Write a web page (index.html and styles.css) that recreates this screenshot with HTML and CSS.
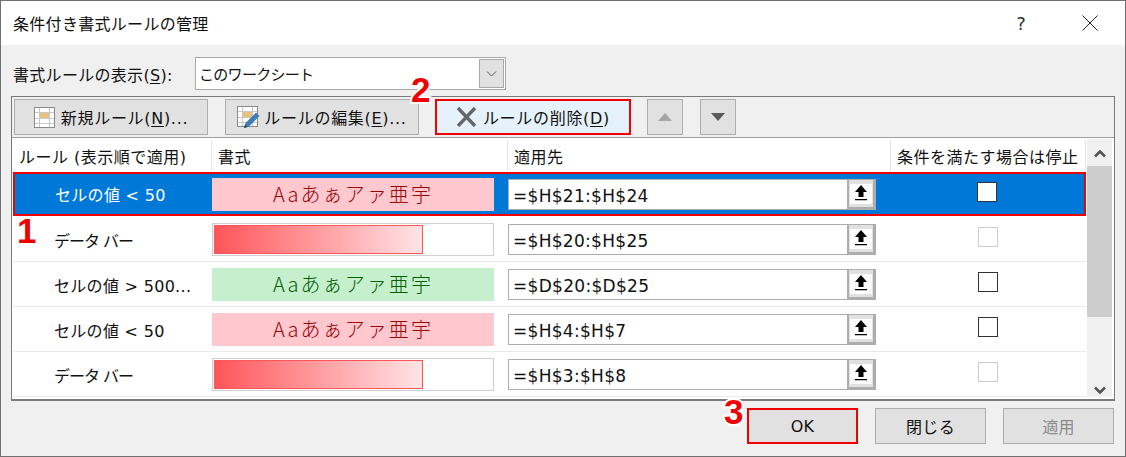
FILE: index.html
```html
<!DOCTYPE html>
<html lang="ja">
<head>
    <meta charset="UTF-8">
    <title>条件付き書式ルールの管理</title>
    <link rel="stylesheet" href="styles.css">
</head>
<body>
    <div class="dialog">
        <div class="titlebar">
            <span class="title">条件付き書式ルールの管理</span>
            <span class="help">?</span>
            <svg class="close" width="16" height="16" viewBox="0 0 16 16"><path d="M.5.5l15 15M15.5.5l-15 15" stroke="#222" fill="none"/></svg>
        </div>

        <div class="show-row">
            <label>書式ルールの表示(<u>S</u>):</label>
            <div class="combo">
                <span>このワークシート</span>
                <div class="combo-btn">
                    <svg width="11" height="6" viewBox="0 0 11 6"><path d="M1 .5l4.500 4.500L10 .5" stroke="#555" fill="none"/></svg>
                </div>
            </div>
        </div>

        <div class="panel">
            <div class="toolbar">
                <div class="btn btn-new">
                    <svg width="21" height="21" viewBox="0 0 21 21"><rect x=".5" y=".5" width="20" height="20" fill="#fff" stroke="#8a8a8a"/><rect x="6" y="6" width="10" height="5" fill="#e8c27e"/><path d="M1 5.500h19M1 11.500h19M1 16.500h19M5.500 1v19M15.500 1v19" stroke="#c8c8c8" fill="none"/></svg>
                    <span>新規ルール(<u>N</u>)...</span>
                </div>
                <div class="btn btn-edit">
                    <svg width="23" height="23" viewBox="0 0 23 23"><rect x=".5" y=".5" width="20" height="20" fill="#fff" stroke="#8a8a8a"/><rect x="6" y="6" width="10" height="5" fill="#e8c27e"/><path d="M1 5.500h19M1 11.500h19M1 16.500h19M5.500 1v19M15.500 1v19" stroke="#c8c8c8" fill="none"/><path d="M7 22l1.500-5L19 6.500l3.500 3.500L12 20.500z" fill="#3f7fb5"/><path d="M7 22l1-3.500 2.500 2.500z" fill="#24465f"/></svg>
                    <span>ルールの編集(<u>E</u>)...</span>
                </div>
                <div class="btn btn-delete">
                    <svg width="21" height="20" viewBox="0 0 21 20"><path d="M2 1l17 18M19 1L2 19" stroke="#666" stroke-width="3.400" fill="none"/></svg>
                    <span>ルールの削除(<u>D</u>)</span>
                </div>
                <div class="btn btn-move">
                    <svg width="14" height="8" viewBox="0 0 14 8"><path d="M7 0l7 8H0z" fill="#a6a6a6"/></svg>
                </div>
                <div class="btn btn-move">
                    <svg width="14" height="8" viewBox="0 0 14 8"><path d="M0 0h14L7 8z" fill="#5a5a5a"/></svg>
                </div>
            </div>

            <div class="list">
                <div class="table">
                    <div class="head">
                        <div>ルール (表示順で適用)</div>
                        <div>書式</div>
                        <div>適用先</div>
                        <div>条件を満たす場合は停止</div>
                    </div>

                    <div class="row selected">
                        <div class="rule">セルの値 &lt; 50</div>
                        <div class="sample pink">Aaあぁアァ亜宇</div>
                        <div class="range"><span>=$H$21:$H$24</span><b class="pick"><svg width="12" height="16" viewBox="0 0 12 16"><path d="M6 0l6 7H8.500v5h-5V7H0zM0 14h12v1.300H0z"/></svg></b></div>
                        <div class="check"><i></i></div>
                    </div>
                    <div class="row">
                        <div class="rule rule-bar">データ バー</div>
                        <div class="sample databar"><i></i></div>
                        <div class="range"><span>=$H$20:$H$25</span><b class="pick"><svg width="12" height="16" viewBox="0 0 12 16"><path d="M6 0l6 7H8.500v5h-5V7H0zM0 14h12v1.300H0z"/></svg></b></div>
                        <div class="check off"><i></i></div>
                    </div>
                    <div class="row">
                        <div class="rule">セルの値 &gt; 500...</div>
                        <div class="sample green">Aaあぁアァ亜宇</div>
                        <div class="range"><span>=$D$20:$D$25</span><b class="pick"><svg width="12" height="16" viewBox="0 0 12 16"><path d="M6 0l6 7H8.500v5h-5V7H0zM0 14h12v1.300H0z"/></svg></b></div>
                        <div class="check"><i></i></div>
                    </div>
                    <div class="row">
                        <div class="rule">セルの値 &lt; 50</div>
                        <div class="sample pink">Aaあぁアァ亜宇</div>
                        <div class="range"><span>=$H$4:$H$7</span><b class="pick"><svg width="12" height="16" viewBox="0 0 12 16"><path d="M6 0l6 7H8.500v5h-5V7H0zM0 14h12v1.300H0z"/></svg></b></div>
                        <div class="check"><i></i></div>
                    </div>
                    <div class="row">
                        <div class="rule rule-bar">データ バー</div>
                        <div class="sample databar"><i></i></div>
                        <div class="range"><span>=$H$3:$H$8</span><b class="pick"><svg width="12" height="16" viewBox="0 0 12 16"><path d="M6 0l6 7H8.500v5h-5V7H0zM0 14h12v1.300H0z"/></svg></b></div>
                        <div class="check off"><i></i></div>
                    </div>
                </div>

                <div class="scrollbar">
                    <svg width="12" height="8" viewBox="0 0 12 8"><path d="M1 6.500l5-5 5 5" stroke="#555" stroke-width="2.600" fill="none"/></svg>
                    <div class="thumb"></div>
                    <svg width="12" height="8" viewBox="0 0 12 8"><path d="M1 1.500l5 5 5-5" stroke="#555" stroke-width="2.600" fill="none"/></svg>
                </div>
            </div>
        </div>

        <div class="footer">
            <div class="btn foot-btn ok">OK</div>
            <div class="btn foot-btn">閉じる</div>
            <div class="btn foot-btn disabled">適用</div>
        </div>

        <span class="num num-1">1</span>
        <span class="num num-2">2</span>
        <span class="num num-3">3</span>
    </div>
</body>
</html>
```

FILE: styles.css
```css
* {
    box-sizing: border-box;
    margin: 0;
    padding: 0;
}

body {
    width: 1126px;
    height: 457px;
    overflow: hidden;
    font-family: "DejaVu Sans", "Noto Sans CJK JP", sans-serif;
    font-size: 16px;
    letter-spacing: 0.3px;
    color: #111;
}

u {
    text-underline-offset: 2px;
}

.dialog {
    position: relative;
    width: 1126px;
    height: 457px;
    border: 1px solid #707070;
    background: #f0f0f0;
}

/* title bar */
.titlebar {
    display: flex;
    align-items: center;
    height: 44px;
    background: white;
    padding-left: 12px;
}

.title {
    flex: 1;
}

.help {
    margin-right: 56px;
    font-size: 18px;
    color: #333;
}

.close {
    margin-right: 27px;
}

/* rule display selector */
.show-row {
    display: flex;
    align-items: center;
    height: 33px;
    margin-top: 12px;
    padding-left: 12px;
}

.show-row label {
    width: 182px;
}

.combo {
    display: flex;
    align-items: center;
    justify-content: space-between;
    width: 311px;
    height: 33px;
    border: 1px solid #a9a9a9;
    background: white;
    padding: 1px 1px 1px 3px;
    font-size: 15px;
    letter-spacing: -0.7px;
}

.combo-btn {
    display: flex;
    align-items: center;
    justify-content: center;
    width: 25px;
    height: 29px;
    border: 1px solid #a9a9a9;
    background: #e1e1e1;
}

/* main panel */
.panel {
    width: 1104px;
    height: 305px;
    margin: 6px 0 0 10px;
    border: 1px solid #7a7a7a;
    border-bottom-width: 2px;
}

.toolbar {
    display: flex;
    height: 40px;
    padding: 2px 0 0 2px;
}

.btn {
    display: flex;
    align-items: center;
    justify-content: center;
    gap: 6px;
    height: 36px;
    border: 1px solid #adadad;
    background: #e1e1e1;
    letter-spacing: 0.7px;
}

.btn-new {
    width: 194px;
    margin-right: 17px;
}

.btn-edit {
    width: 194px;
    margin-right: 16px;
    gap: 4px;
}

.btn-delete {
    width: 196px;
    margin-right: 16px;
    border: 2px solid #f00000;
    background: #e5f1fb;
}

.btn-move {
    width: 36px;
    margin-right: 17px;
}

/* rule list */
.list {
    display: flex;
    height: 262px;
    border-top: 1px solid #a0a0a0;
    background: white;
}

.table {
    width: 1073px;
    margin-left: 1px;
}

.head,
.row {
    display: grid;
    grid-template-columns: 199px 296px 383px 1fr;
}

.head {
    height: 34px;
    border-bottom: 1px solid #fff;
    letter-spacing: 0.5px;
}

.head div {
    display: flex;
    align-items: center;
    padding-left: 6px;
    border-right: 1px solid #e5e5e5;
    margin-top: 2px;
    white-space: nowrap;
}

.row {
    height: 45px;
    align-items: center;
    border-bottom: 1px solid #eaeaea;
}

.row.selected {
    height: 44px;
    margin-bottom: 1px;
    background: #0078d7;
    color: white;
    border: 2px solid #f00000;
    grid-template-columns: 197px 296px 383px 1fr;
}

.rule {
    padding: 1px 0 0 41px;
}

.rule-bar {
    letter-spacing: -1px;
}

.selected .rule {
    padding: 0 0 0 40px;
}

.sample {
    display: flex;
    align-items: center;
    justify-content: center;
    width: 282px;
    height: 33px;
    font-family: "Noto Sans CJK JP", sans-serif;
    font-weight: 300;
    font-size: 20px;
    letter-spacing: 2.100px;
    padding-bottom: 2px;
}

.pink {
    background: #ffc7ce;
    color: #9c0006;
}

.green {
    background: #c6efce;
    color: #006100;
}

.databar {
    justify-content: flex-start;
    border: 1px solid #cfcfcf;
    padding: 1px;
    background: white;
}

.databar i {
    width: 209px;
    height: 29px;
    border: 1px solid #ff555a;
    background: linear-gradient(to right, #ff555a, #ffe4e5);
}

.range {
    display: flex;
    align-items: center;
    justify-content: space-between;
    width: 368px;
    height: 31px;
    border: 1px solid #adadad;
    background: white;
    color: #111;
    padding-left: 4px;
    font-size: 17px;
}

.range span {
    margin-top: 3px;
}

.pick {
    display: flex;
    align-items: center;
    justify-content: center;
    width: 29px;
    height: 31px;
    margin: 0 -1px 0 0;
    border: 1px solid #adadad;
    border-width: 1px 3px 3px 2px;
    background: white;
    box-shadow: inset 0 4px 0 #e1e1e1, inset 0 -3px 0 #e1e1e1, inset 1px 0 0 #e1e1e1, inset -1px 0 0 #e1e1e1;
}

.check {
    display: flex;
    justify-content: center;
    margin: -5px 2px 0 0;
}

.check i {
    width: 20px;
    height: 20px;
    border: 1px solid #333;
    background: white;
}

.check.off i {
    border-color: #ccc;
}

.scrollbar {
    display: flex;
    flex-direction: column;
    align-items: center;
    width: 25px;
    height: 258px;
    background: #f0f0f0;
    margin-top: 1px;
    margin-left: 1px;
    padding-top: 11px;
}

.thumb {
    width: 100%;
    height: 151px;
    margin: 8px 0 69px;
    background: #cdcdcd;
}

/* dialog buttons */
.footer {
    display: flex;
    justify-content: flex-end;
    gap: 17px;
    margin-top: 7px;
    padding-right: 11px;
}

.foot-btn {
    width: 111px;
    letter-spacing: 0.3px;
}

.ok {
    border: 2px solid #f00000;
}

.disabled {
    color: #8a8a8a;
}

/* red callout numbers */
.num {
    position: absolute;
    color: #f00000;
    font-family: "Liberation Sans", sans-serif;
    font-weight: bold;
    font-size: 35px;
    line-height: 35px;
    -webkit-text-stroke: 4px white;
    paint-order: stroke fill;
}

.num-1 { left: 16px; top: 212px; }
.num-2 { left: 410px; top: 71px; }
.num-3 { left: 723px; top: 393px; }
```
